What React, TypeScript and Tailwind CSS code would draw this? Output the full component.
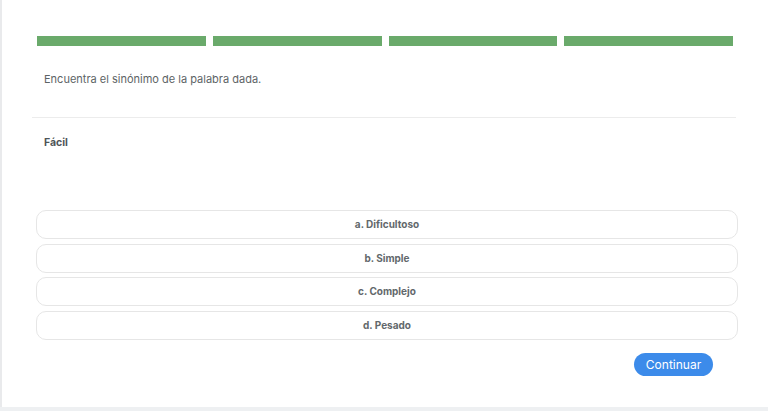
import React from 'react';

const options = ['a. Dificultoso', 'b. Simple', 'c. Complejo', 'd. Pesado'];

const App: React.FC = () => {
  return (
    <div className="min-h-[411px] w-[768px] bg-[#eef0f2] font-['Inter',sans-serif]">
      <div className="h-[407px] w-[768px] bg-white border-l-2 border-[#e9eaec] pt-[36px]">
        {/* progress */}
        <div className="ml-[35px] w-[696px] flex gap-[7px]">
          {[0, 1, 2, 3].map((i) => (
            <div key={i} className="flex-1 h-[10px] bg-[#6aaa6b]" />
          ))}
        </div>

        <p className="ml-[42px] mt-[26px] text-[11px] text-[#5d6466] leading-[14px]">
          Encuentra el sinónimo de la palabra dada.
        </p>

        <div className="ml-[30px] w-[704px] mt-[31px] border-t border-[#ececec]" />

        <p className="ml-[42px] mt-[18px] text-[10.5px] font-bold text-[#4e5457] leading-[14px]">Fácil</p>

        {/* options */}
        <div className="ml-[34px] w-[702px] mt-[60px] flex flex-col gap-[4.7px]">
          {options.map((o) => (
            <div
              key={o}
              className="h-[29px] rounded-[10px] border border-[#e6e6e6] flex items-center justify-center text-[10px] font-bold text-[#62686b]"
            >
              {o}
            </div>
          ))}
        </div>

        <div className="w-[711px] mt-[13px] flex justify-end">
          <button className="w-[79px] h-[23px] rounded-full bg-[#3c8bea] text-white text-[12px] leading-none">
            Continuar
          </button>
        </div>
      </div>
    </div>
  );
};

export default App;
